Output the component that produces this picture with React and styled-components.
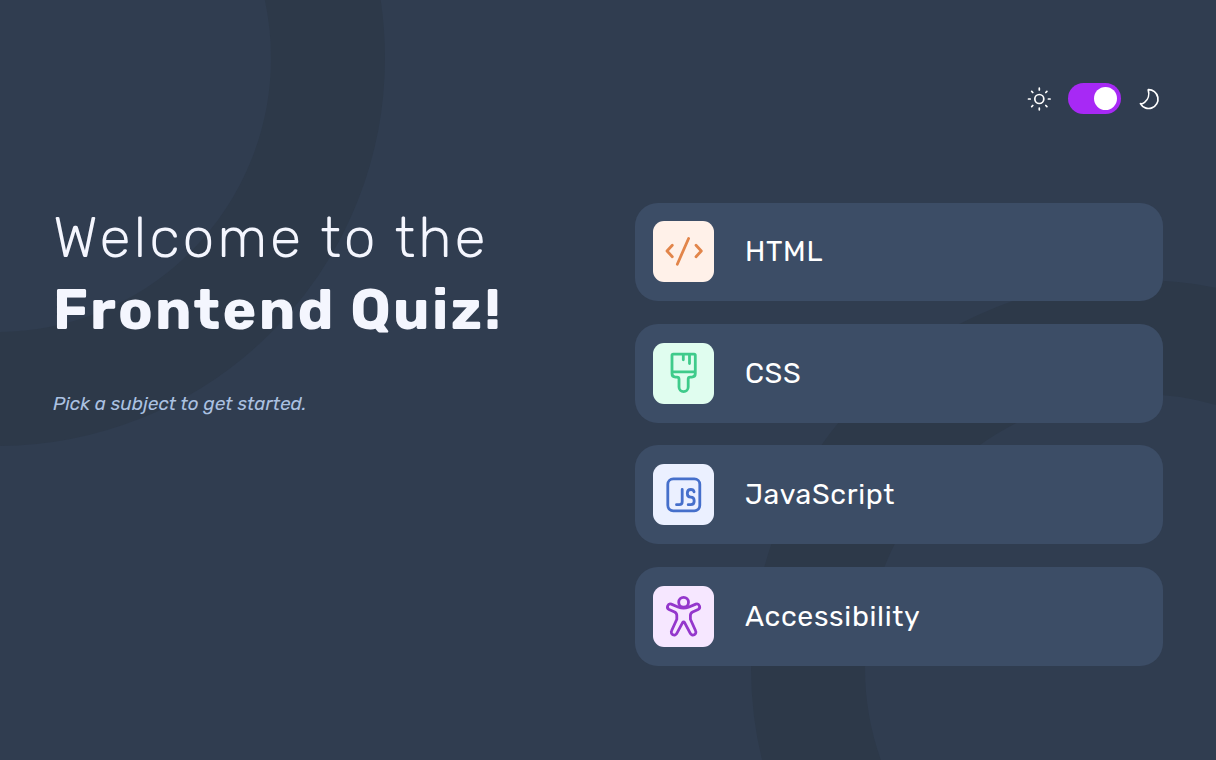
import React, { useState } from "react";
import styled, { createGlobalStyle } from "styled-components";

const GlobalStyle = createGlobalStyle`
  *, *::before, *::after { box-sizing: border-box; }
  html, body { margin: 0; height: 100%; }
  body {
    background: #303d50;
    font-family: Rubik, Roboto, sans-serif;
    color: #fff;
    overflow: hidden;
  }
`;

const Page = styled.div`
  position: relative;
  height: 760px;
  overflow: hidden;
  padding: 83.2px 53px 0 53px;
`;

const Backdrop = styled.svg`
  position: absolute;
  inset: 0;
  width: 1216px;
  height: 760px;
`;

const Header = styled.header`
  position: relative;
  display: flex;
  justify-content: flex-end;
  align-items: center;
  gap: 14px;
  height: 30.8px;
`;

const ThemeIcon = styled.svg`
  width: 28px;
  height: 28px;
  fill: none;
  stroke: #fff;
  stroke-width: 1.7;
  stroke-linecap: round;
  stroke-linejoin: round;
`;

const Toggle = styled.button`
  display: flex;
  align-items: center;
  justify-content: ${({ $on }) => ($on ? "flex-end" : "flex-start")};
  width: 53px;
  height: 30.8px;
  padding: 0 3.8px;
  border: 0;
  border-radius: 16px;
  background: #a729f5;
  cursor: pointer;
`;

const Knob = styled.span`
  width: 23px;
  height: 23px;
  border-radius: 50%;
  background: #fff;
`;

const Main = styled.main`
  position: relative;
  display: grid;
  grid-template-columns: 1fr 528px;
  margin-top: 88.6px;
`;

const Intro = styled.section`
  display: flex;
  flex-direction: column;
  align-items: flex-start;
  white-space: nowrap;
`;

const Title = styled.h1`
  margin: -0.6px 0 0;
  font-size: 57px;
  line-height: 72px;
  font-weight: 300;
  color: #f4f6fe;
`;

const TitleLine = styled.span`
  display: block;
  font-weight: ${({ $weight }) => $weight};
  letter-spacing: ${({ $spacing }) => $spacing}px;
`;

const Hint = styled.p`
  margin: 44px 0 0;
  font-size: 19px;
  line-height: 28px;
  font-style: italic;
  color: #abc1e1;
`;

const Subjects = styled.nav`
  display: flex;
  flex-direction: column;
  gap: 22.7px;
`;

const Subject = styled.button`
  display: flex;
  align-items: center;
  gap: 30.5px;
  height: 98.75px;
  padding: 0 18.4px;
  border: 0;
  border-radius: 23px;
  background: #3c4d66;
  color: #fff;
  font: 400 28.5px/1.2 Rubik, Roboto, sans-serif;
  letter-spacing: 0.67px;
  text-align: left;
  cursor: pointer;
`;

const SubjectName = styled.span`
  padding-bottom: 1.1px;
`;

const Tile = styled.span`
  display: block;
  width: 61px;
  height: 61px;
  margin-bottom: 0.5px;
  border-radius: 11px;
  background: ${({ $bg }) => $bg};
`;

const Glyph = styled.svg`
  display: block;
  width: 61px;
  height: 61px;
  fill: none;
  stroke: ${({ $color }) => $color};
  stroke-width: 2.8;
  stroke-linecap: round;
  stroke-linejoin: round;
`;

const subjects = [
  {
    name: "HTML",
    bg: "#fff1e9",
    color: "#e2854a",
    art: <path d="M19.3 24.3 14 30 19.3 35.7M35.6 17.5 24.3 43.2M43 24.3 48.3 30 43 35.7" />,
  },
  {
    name: "CSS",
    bg: "#e0fdef",
    color: "#3fcb8b",
    art: (
      <path d="M20.2 11.1H41.1Q42.3 11.1 42.3 12.3V30.6Q42.3 34.1 38.8 34.1H37.2Q35.2 34.1 35.2 36.1V44A4.6 4.6 0 0 1 26 44V36.1Q26 34.1 24 34.1H22.5Q19 34.1 19 30.6V12.3Q19 11.1 20.2 11.1ZM19 28.8H42.3M30.3 11.5V16.8M36.5 11.5V20.6" />
    ),
  },
  {
    name: "JavaScript",
    bg: "#ebf0ff",
    color: "#456fcb",
    art: (
      <>
        <rect x="14.8" y="14.8" width="32" height="32" rx="5.5" />
        <path d="M29.2 25.5V37.7Q29.2 40.7 26.2 40.7H23.5M41.1 27.9Q40.5 25.5 37.9 25.5 34.3 25.5 34.3 29.3 34.3 33.1 37.7 33.1 41.2 33.1 41.2 36.9 41.2 40.7 37.6 40.7H35.2" />
      </>
    ),
  },
  {
    name: "Accessibility",
    bg: "#f6e7ff",
    color: "#9437cc",
    art: (
      <>
        <circle cx="30.6" cy="16.2" r="4.9" />
        <path d="M25.6 21.2 18.3 18.1A2.9 2.9 0 0 0 16 23.4L21.6 26Q23.8 27.1 23.8 29.4V33.2L18.6 44.8A2.9 2.9 0 0 0 23.8 47.4L29.6 36.6Q30.6 35.2 31.6 36.6L37.3 47.4A2.9 2.9 0 0 0 42.6 44.8L37.4 33.2V29.4Q37.4 27.1 39.6 26L45.1 23.4A2.9 2.9 0 0 0 42.8 18.1L35.4 21.2Q30.5 23.2 25.6 21.2Z" />
      </>
    ),
  },
];

export default function App() {
  const [dark, setDark] = useState(true);

  return (
    <>
      <GlobalStyle />
      <Page>
        <Backdrop viewBox="0 0 1216 760" fill="none" stroke="#2d3949" strokeWidth="114" aria-hidden="true">
          <circle cx="-3" cy="58" r="331" />
          <circle cx="1139" cy="668" r="331" />
        </Backdrop>
        <Header>
          <ThemeIcon viewBox="0 0 28 28" aria-hidden="true">
            <circle cx="13.3" cy="14" r="4.5" />
            <path d="M13.3 3.2v1.7M13.3 23.1v1.7M2.5 14h1.7M22.4 14h1.7M5.7 6.4l1.1 1.1M19.8 20.5l1.1 1.1M5.7 21.6l1.1-1.1M19.8 7.5l1.1-1.1" />
          </ThemeIcon>
          <Toggle $on={dark} aria-label="Dark mode" aria-pressed={dark} onClick={() => setDark(!dark)}>
            <Knob />
          </Toggle>
          <ThemeIcon viewBox="0 0 28 28" aria-hidden="true">
            <path d="M13.2 4.7A9.4 9.4 0 1 1 5.4 18.7Q7.5 19 9.6 17.4C13.2 14.6 14.6 9.4 13.2 4.7Z" />
          </ThemeIcon>
        </Header>
        <Main>
          <Intro>
            <Title>
              <TitleLine $weight={300} $spacing={2.85}>Welcome to the</TitleLine>
              <TitleLine $weight={700} $spacing={2.28}>Frontend Quiz!</TitleLine>
            </Title>
            <Hint>Pick a subject to get started.</Hint>
          </Intro>
          <Subjects>
            {subjects.map(({ name, bg, color, art }) => (
              <Subject key={name}>
                <Tile $bg={bg}>
                  <Glyph viewBox="0 0 61 61" $color={color} aria-hidden="true">{art}</Glyph>
                </Tile>
                <SubjectName>{name}</SubjectName>
              </Subject>
            ))}
          </Subjects>
        </Main>
      </Page>
    </>
  );
}
